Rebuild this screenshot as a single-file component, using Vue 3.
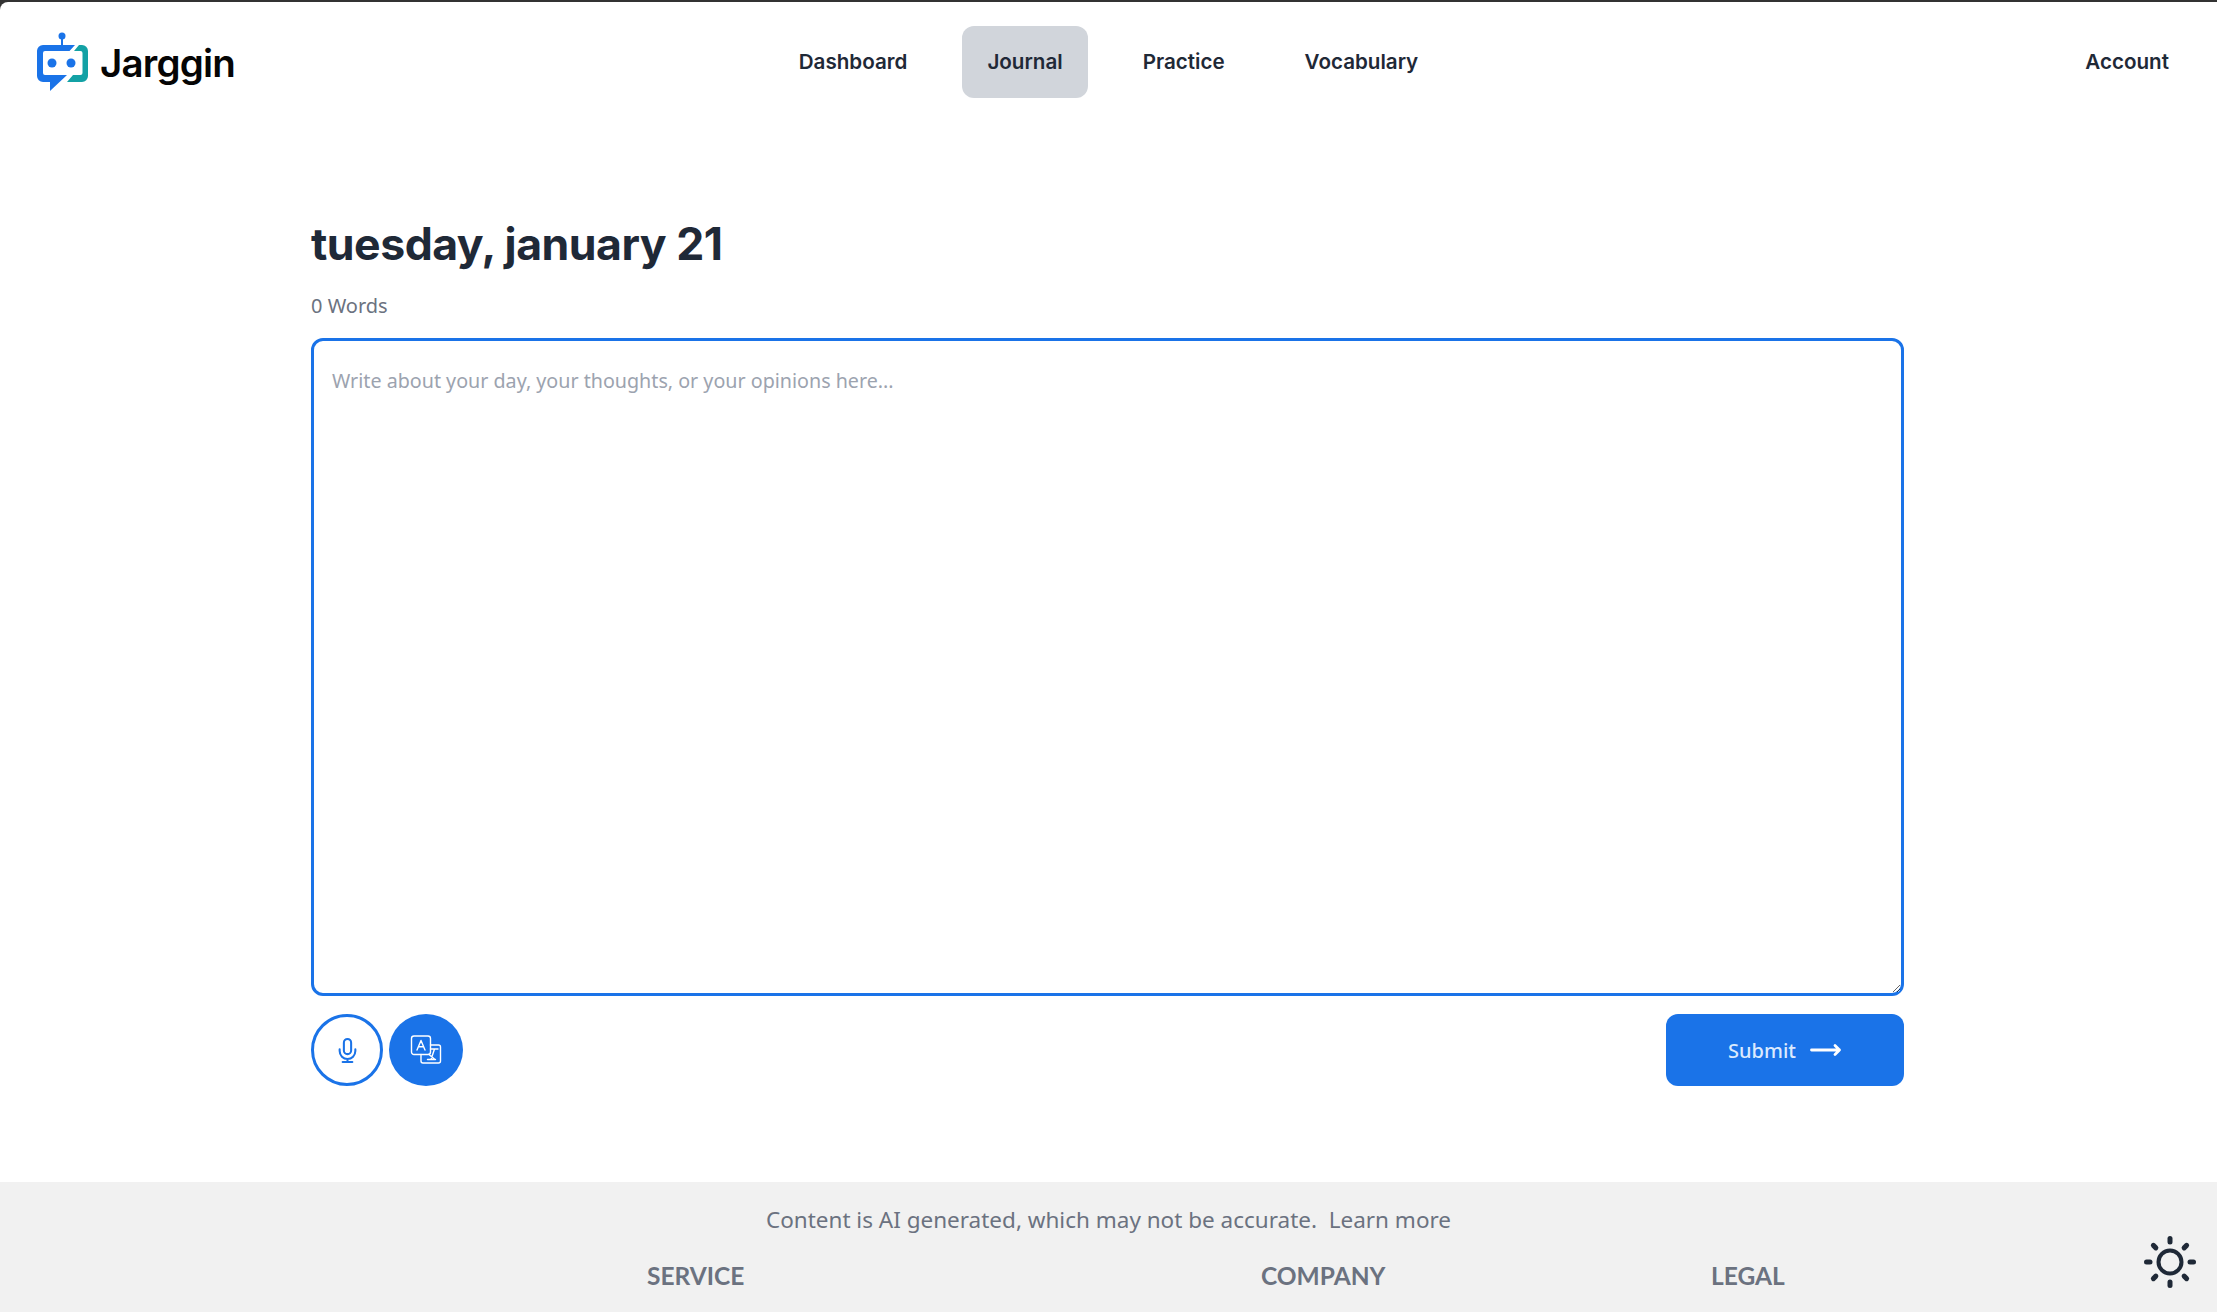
<script setup>
const links = [
  { label: 'Dashboard', active: false },
  { label: 'Journal', active: true },
  { label: 'Practice', active: false },
  { label: 'Vocabulary', active: false },
]
const rays = [0, 45, 90, 135, 180, 225, 270, 315]
</script>

<template>
  <div class="page">
    <div class="shell">
      <header class="top">
        <div class="brand">
          <svg class="logo" viewBox="36 32 54 60" width="54" height="60">
            <circle cx="62" cy="36" r="3.500" fill="#1a73e8" />
            <rect x="61" y="38" width="2" height="7" fill="#1a73e8" />
            <path d="M43 45H75L69.500 51H45a2 2 0 0 0-2 2V73a2 2 0 0 0 2 2H67L50 91V82H43a6 6 0 0 1-6-6V51a6 6 0 0 1 6-6Z" fill="#1a73e8" />
            <path d="M79 45H82a6 6 0 0 1 6 6V76a6 6 0 0 1-6 6H67L73 75H80.500a2 2 0 0 0 2-2V53a2 2 0 0 0-2-2H74Z" fill="#13a1a5" />
            <circle cx="52" cy="63" r="4.500" fill="#1a73e8" />
            <circle cx="71" cy="63" r="4.500" fill="#1a73e8" />
          </svg>
          <span class="word">Jarggin</span>
        </div>
        <nav class="links">
          <a v-for="l in links" :key="l.label" class="link" :class="{ on: l.active }">{{ l.label }}</a>
        </nav>
        <a class="account">Account</a>
      </header>

      <main class="main">
        <h1 class="date">tuesday, january 21</h1>
        <p class="count">0 Words</p>
        <textarea class="entry" placeholder="Write about your day, your thoughts, or your opinions here..."></textarea>
        <div class="actions">
          <div class="round">
            <button class="circle outline" aria-label="Record">
              <svg viewBox="0 0 24 24" width="29" height="29" fill="none" stroke="#1a73e8" stroke-width="1.700" stroke-linecap="round" stroke-linejoin="round">
                <rect x="9" y="2.500" width="6" height="12.500" rx="3" />
                <path d="M5.500 11v1.500a6.500 6.500 0 0 0 13 0V11M12 19v2.500M8 21.500h8" />
              </svg>
            </button>
            <button class="circle solid" aria-label="Translate">
              <svg viewBox="0 0 32 32" width="32" height="32" fill="none" stroke="#fff" stroke-width="1.400" stroke-linejoin="round" stroke-linecap="round">
                <path d="M20.500 11h8a2 2 0 0 1 2 2V27a2 2 0 0 1-2 2H13a2 2 0 0 1-2-2v-6.500" />
                <rect x="1.500" y="2" width="19" height="18.500" rx="2.500" />
                <path d="M7 16 11 6.500l4 9.500M8.500 12.800h5" />
                <path d="M20.500 15H28M24.500 15 21 25.500M17.500 25.500h8M19 20.500l6 5" />
              </svg>
            </button>
          </div>
          <button class="submit">
            <span>Submit</span>
            <svg viewBox="0 0 32 14" width="32" height="14" fill="none" stroke="#fff" stroke-width="2.800" stroke-linecap="round" stroke-linejoin="round">
              <path d="M1.500 7H29.500M25 2.500l4.500 4.500L25 11.500" />
            </svg>
          </button>
        </div>
      </main>

      <footer class="foot">
        <p class="note">Content is AI generated, which may not be accurate.&nbsp; Learn more</p>
        <div class="cols">
          <h2 class="head">SERVICE</h2>
          <h2 class="head">COMPANY</h2>
          <h2 class="head">LEGAL</h2>
        </div>
        <svg class="sun" viewBox="0 0 52 52" width="52" height="52" fill="none" stroke="#1f2937" stroke-linecap="round">
          <circle cx="26" cy="26" r="11.500" stroke-width="4" />
          <line v-for="a in rays" :key="a" x1="26" y1="2.500" x2="26" y2="6" stroke-width="5" :transform="`rotate(${a} 26 26)`" />
        </svg>
      </footer>
    </div>
  </div>
</template>

<style>
html, body { margin: 0; background: #fff; }
</style>

<style scoped>
.page {
  height: 1312px;
  overflow: hidden;
  padding-top: 2px;
  box-sizing: border-box;
  background: #333;
  font-family: "Noto Sans", "Open Sans", sans-serif;
}
.shell {
  position: relative;
  height: 1310px;
  display: flex;
  flex-direction: column;
  overflow: hidden;
  background: #fff;
  border-top-left-radius: 8px;
}
.top {
  display: grid;
  grid-template-columns: 1fr auto 1fr;
  align-items: center;
  padding: 24px 36px 0;
  height: 72px;
}
.brand { display: flex; align-items: center; gap: 10px; }
.logo { flex: none; }
.word {
  margin-top: 2px;
  font-family: Inter, sans-serif;
  font-size: 38.500px;
  font-weight: 600;
  color: #050505;
  letter-spacing: -0.8px;
}
.links { display: flex; gap: 30px; }
.link, .account {
  font-family: Inter, sans-serif;
  font-size: 20.600px;
  font-weight: 600;
  color: #1f2937;
}
.link {
  display: flex;
  align-items: center;
  height: 72px;
  padding: 0 25px 2px;
  box-sizing: border-box;
  border-radius: 12px;
}
.link.on { background: #d1d5db; }
.account { justify-self: end; margin: 0 12px 2px 0; }
.main {
  width: 1593px;
  margin-left: 311px;
  flex: 1;
}
.date {
  margin: 118px 0 0;
  font-family: Inter, sans-serif;
  font-size: 44.600px;
  line-height: 56px;
  font-weight: 700;
  color: #1f2937;
  letter-spacing: -0.5px;
}
.count {
  margin: 20px 0 0;
  font-size: 20px;
  line-height: 28px;
  color: #6b7280;
}
.entry {
  display: block;
  box-sizing: border-box;
  width: 100%;
  height: 658px;
  margin-top: 18px;
  padding: 26px 18px;
  border: 3px solid #1a73e8;
  border-radius: 12px;
  outline: none;
  font-family: inherit;
  font-size: 19.700px;
  line-height: 28px;
  background: #fff;
}
.entry::placeholder { color: #9ca3af; opacity: 1; }
.actions {
  display: flex;
  justify-content: space-between;
  margin-top: 18px;
}
.round { display: flex; gap: 6px; }
.circle {
  box-sizing: border-box;
  display: flex;
  align-items: center;
  justify-content: center;
  height: 72px;
  padding: 0;
  border-radius: 50%;
}
.outline { width: 72px; border: 3px solid #1a73e8; background: #fff; }
.solid { width: 74px; border: none; background: #1a73e8; }
.submit {
  display: flex;
  align-items: center;
  justify-content: center;
  gap: 14px;
  width: 238px;
  height: 72px;
  border: none;
  border-radius: 12px;
  background: #1a73e8;
  color: #dbeafe;
  font-family: inherit;
  font-size: 20px;
  font-weight: 500;
}
.foot {
  position: relative;
  height: 130px;
  flex: none;
  background: #f1f1f1;
  overflow: hidden;
}
.note {
  margin: 22px 0 0;
  text-align: center;
  font-size: 22.500px;
  line-height: 32px;
  color: #6b7280;
}
.cols {
  display: grid;
  grid-template-columns: 614px 450px 1fr;
  margin: 24px 0 0 647px;
}
.head {
  margin: 0;
  font-family: Lato, sans-serif;
  font-size: 24.500px;
  line-height: 32px;
  font-weight: 700;
  color: #6b7280;
}
.sun { position: absolute; right: 21px; top: 54px; }
</style>
